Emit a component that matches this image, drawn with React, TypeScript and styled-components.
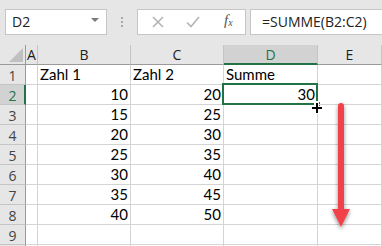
import React from "react";
import styled, { createGlobalStyle, css } from "styled-components";

const GREEN = "#217346";

const GlobalStyle = createGlobalStyle`
  html, body { margin: 0; padding: 0; background: #ffffff; overflow: hidden; }
  body { font-family: "Open Sans", "Liberation Sans", sans-serif; }
`;

const rows = [
  { n: 1, b: "Zahl 1", c: "Zahl 2", d: "Summe", text: true },
  { n: 2, b: "10", c: "20", d: "30" },
  { n: 3, b: "15", c: "25" },
  { n: 4, b: "20", c: "30" },
  { n: 5, b: "25", c: "35" },
  { n: 6, b: "30", c: "40" },
  { n: 7, b: "35", c: "45" },
  { n: 8, b: "40", c: "50" },
  { n: 9 },
  { n: 10, hidden: true },
];

const App = () => {
  return (
    <Page>
      <GlobalStyle />
      <FormulaBar>
        <NameBox>
          <span>D2</span>
          <DropArrow />
        </NameBox>
        <Grip>
          <i /><i /><i />
        </Grip>
        <FuncBox>
          <FuncIcon>
            <svg width="12" height="12" viewBox="0 0 12 12">
              <path d="M1 1 L11 11 M11 1 L1 11" stroke="#b4b4b4" strokeWidth="1.6" fill="none" />
            </svg>
          </FuncIcon>
          <FuncIcon>
            <svg width="14" height="12" viewBox="0 0 14 12">
              <path d="M1 6.5 L5 10.5 L13 1" stroke="#b4b4b4" strokeWidth="1.6" fill="none" />
            </svg>
          </FuncIcon>
          <Fx>
            f<sub>x</sub>
          </Fx>
        </FuncBox>
        <FormulaInput>=SUMME(B2:C2)</FormulaInput>
      </FormulaBar>

      <Sheet>
        <Corner>
          <svg width="14" height="14" viewBox="0 0 14 14">
            <path d="M14 0 L14 14 L0 14 Z" fill="#c0c0c0" />
          </svg>
        </Corner>
        {["A", "B", "C", "D", "E"].map((l) => (
          <ColHead key={l} active={l === "D"}>{l}</ColHead>
        ))}
        {rows.map((r) => (
          <React.Fragment key={r.n}>
            <RowHead active={r.n === 2}>{r.hidden ? "" : r.n}</RowHead>
            <Cell />
            <Cell numeric={!r.text}>{r.b}</Cell>
            <Cell numeric={!r.text}>{r.c}</Cell>
            <Cell numeric={!r.text}>
              {r.d}
              {r.n === 2 && (
                <>
                  <Selection />
                  <FillHandle />
                  <CrossCursor>
                    <svg width="12" height="12" viewBox="0 0 12 12">
                      <path d="M4 0 H8 V4 H12 V8 H8 V12 H4 V8 H0 V4 H4 Z" fill="#ffffff" />
                      <path d="M5 1 H7 V5 H11 V7 H7 V11 H5 V7 H1 V5 H5 Z" fill="#000000" />
                    </svg>
                  </CrossCursor>
                </>
              )}
            </Cell>
            <Cell>
              {r.n === 2 && (
                <Arrow>
                  <svg width="40" height="140" viewBox="0 0 40 140">
                    <defs>
                      <filter id="sh" x="-50%" y="-20%" width="200%" height="140%">
                        <feGaussianBlur in="SourceAlpha" stdDeviation="2.2" />
                        <feOffset dx="0" dy="2" />
                        <feComponentTransfer>
                          <feFuncA type="linear" slope="0.45" />
                        </feComponentTransfer>
                        <feMerge>
                          <feMergeNode />
                          <feMergeNode in="SourceGraphic" />
                        </feMerge>
                      </filter>
                    </defs>
                    <g filter="url(#sh)">
                      <path
                        d="M17 12 A3 3 0 0 1 23 12 L23 115 L29 115 L20 133 L11 115 L17 115 Z"
                        fill="#f2434a"
                      />
                    </g>
                  </svg>
                </Arrow>
              )}
            </Cell>
          </React.Fragment>
        ))}
      </Sheet>
    </Page>
  );
};

const Page = styled.div`
  width: 382px;
  height: 246px;
  overflow: hidden;
  background: #ffffff;
`;

const FormulaBar = styled.div`
  height: 45px;
  background: #e6e6e6;
  display: flex;
  align-items: flex-start;
  padding: 9px 0 0 5px;
  box-sizing: border-box;
`;

const boxBase = css`
  height: 26px;
  box-sizing: border-box;
  background: #ffffff;
  border: 1px solid #c6c6c6;
`;

const NameBox = styled.div`
  ${boxBase}
  width: 102px;
  display: flex;
  align-items: center;
  justify-content: space-between;
  padding: 0 7px 1px 6px;
  font-size: 14px;
  color: #222;
`;

const DropArrow = styled.div`
  width: 0;
  height: 0;
  border-left: 4px solid transparent;
  border-right: 4px solid transparent;
  border-top: 4px solid #7a7a7a;
  margin-bottom: 3px;
`;

const Grip = styled.div`
  width: 30px;
  height: 26px;
  display: flex;
  flex-direction: column;
  align-items: center;
  justify-content: center;
  gap: 2px;
  i {
    display: block;
    width: 2px;
    height: 2px;
    background: #a8a8a8;
  }
`;

const FuncBox = styled.div`
  ${boxBase}
  width: 109px;
  display: flex;
  align-items: center;
  padding-left: 14px;
`;

const FuncIcon = styled.div`
  width: 34px;
  display: flex;
  align-items: center;
  justify-content: flex-start;
`;

const Fx = styled.div`
  margin-left: 4px;
  font-family: "Liberation Serif", "DejaVu Serif", serif;
  font-style: italic;
  font-size: 15px;
  color: #555;
  padding-bottom: 3px;
  sub {
    font-size: 10px;
    vertical-align: -1px;
  }
`;

const FormulaInput = styled.div`
  ${boxBase}
  margin-left: 4px;
  flex: 1;
  border-right: none;
  padding: 2px 0 0 11px;
  font-size: 14px;
  color: #222;
  line-height: 20px;
`;

const Sheet = styled.div`
  display: grid;
  grid-template-columns: 26px 12px 93px 93px 94px 1fr;
  grid-auto-rows: 20px;
  font-family: "Lato", "Liberation Sans", sans-serif;
  font-size: 15px;
  color: #000;
`;

const headBase = css`
  box-sizing: border-box;
  background: #e6e6e6;
  border-right: 1px solid #c4c4c4;
  border-bottom: 1px solid #c4c4c4;
  display: flex;
  align-items: center;
  justify-content: center;
  font-family: "Open Sans", "Liberation Sans", sans-serif;
  font-size: 14px;
`;

const Corner = styled.div`
  ${headBase}
  border-right-color: #9a9a9a;
  border-bottom-color: #9a9a9a;
  align-items: flex-end;
  justify-content: flex-end;
  padding: 0 2px 2px 0;
`;

const ColHead = styled.div<{ active?: boolean }>`
  ${headBase}
  border-bottom-color: #9a9a9a;
  color: #222;
  ${(p) =>
    p.active &&
    css`
      background: #d2d2d2;
      color: ${GREEN};
      border-bottom: 2px solid ${GREEN};
      padding-top: 1px;
    `}
`;

const RowHead = styled.div<{ active?: boolean }>`
  ${headBase}
  border-right-color: #9a9a9a;
  color: #444;
  padding-top: 1px;
  ${(p) =>
    p.active &&
    css`
      background: #d2d2d2;
      color: ${GREEN};
      border-right: 2px solid ${GREEN};
      padding-left: 1px;
    `}
`;

const Cell = styled.div<{ numeric?: boolean }>`
  position: relative;
  box-sizing: border-box;
  border-right: 1px solid #d4d4d4;
  border-bottom: 1px solid #d4d4d4;
  display: flex;
  align-items: flex-end;
  justify-content: ${(p) => (p.numeric ? "flex-end" : "flex-start")};
  padding: 0 2px 1px 2px;
  line-height: 18px;
  white-space: nowrap;
`;

const Selection = styled.div`
  position: absolute;
  left: -2px;
  top: -2px;
  right: -1px;
  bottom: -1px;
  border: 2px solid ${GREEN};
  pointer-events: none;
`;

const FillHandle = styled.div`
  position: absolute;
  right: -4px;
  bottom: -4px;
  width: 5px;
  height: 5px;
  background: ${GREEN};
  border: 1px solid #fff;
`;

const CrossCursor = styled.div`
  position: absolute;
  right: -6px;
  bottom: -10px;
  width: 12px;
  height: 12px;
  z-index: 3;
  svg {
    display: block;
  }
`;

const Arrow = styled.div`
  position: absolute;
  left: 3px;
  top: 9px;
  z-index: 2;
  svg {
    display: block;
  }
`;

export default App;
